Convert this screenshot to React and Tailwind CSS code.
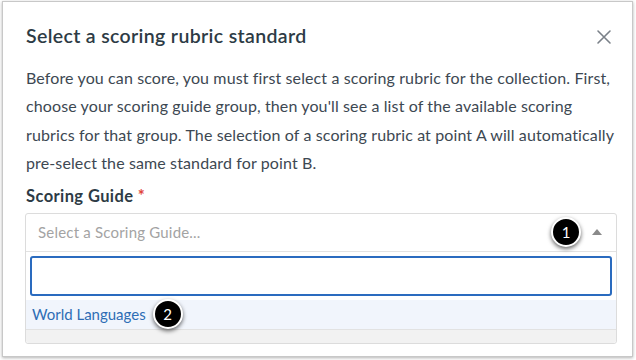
import React from "react";

export default function App() {
  return (
    <div className="w-[636px] h-[360px] bg-white overflow-hidden" style={{ fontFamily: "Lato, 'Open Sans', sans-serif" }}>
      <div className="ml-[2px] mt-[1px] w-[631px] h-[356px] border border-[#c8c8c8] bg-white shadow-[0_1px_3px_rgba(0,0,0,0.3)] flex flex-col">
        <div className="flex items-center justify-between pl-[23px] pr-[20px] pt-[23px] h-[22px] box-content">
          <h1 className="text-[19.5px] tracking-[0.35px] font-semibold text-[#2d3b45] leading-[22px]">Select a scoring rubric standard</h1>
          <svg width="16" height="16" viewBox="0 0 16 16" className="mt-[2px]">
            <path d="M2 2 L14 14 M14 2 L2 14" stroke="#7a8088" strokeWidth="1.6" strokeLinecap="round" />
          </svg>
        </div>
        <p className="mt-[17px] pl-[23px] pr-[10px] text-[16px] tracking-[0.12px] leading-[28.4px] text-[#3d4852] whitespace-nowrap">
          Before you can score, you must first select a scoring rubric for the collection. First,<br />
          choose your scoring guide group, then you'll see a list of the available scoring<br />
          rubrics for that group. The selection of a scoring rubric at point A will automatically<br />
          pre-select the same standard for point B.
        </p>
        <div className="mt-[8px] pl-[23px] text-[16.5px] tracking-[0.4px] font-bold text-[#2d3b45] leading-[20px]">
          Scoring Guide <span className="text-[#e0443a]">*</span>
        </div>
        <div className="mt-[7px] ml-[22px] w-[592px] rounded-[3px] border border-[#dcdcdc] bg-white">
          <div className="h-[38px] flex items-center pl-[12px] pr-[14px] border-b border-[#e2e2e2]">
            <span className="text-[15px] tracking-[0.2px] text-[#a3a3a3] flex-1">Select a Scoring Guide...</span>
            <div className="w-[30px] h-[30px] mr-[11px] rounded-full bg-black border-2 border-white shadow-[0_2px_4px_rgba(0,0,0,0.6)] flex items-center justify-center text-white text-[15px]">1</div>
            <svg width="10" height="6" viewBox="0 0 10 6">
              <path d="M0 6 L5 0 L10 6 Z" fill="#8a8a8a" />
            </svg>
          </div>
          <div className="pt-[4px] px-[4px] bg-white">
            <div className="h-[40px] rounded-[3px] border-2 border-[#2a6bbf] bg-white"></div>
          </div>
          <div className="mt-[4px] h-[30px] bg-[#f1f5fc] flex items-center pl-[6px] border-b border-[#e2e2e2]">
            <span className="text-[15px] text-[#2e6db5]">World Languages</span>
            <div className="ml-[7px] w-[30px] h-[30px] rounded-full bg-black border-2 border-white shadow-[0_2px_4px_rgba(0,0,0,0.6)] flex items-center justify-center text-white text-[15px]">2</div>
          </div>
          <div className="h-[13px] bg-[#f2f2f2] rounded-b-[3px]"></div>
        </div>
      </div>
    </div>
  );
}
